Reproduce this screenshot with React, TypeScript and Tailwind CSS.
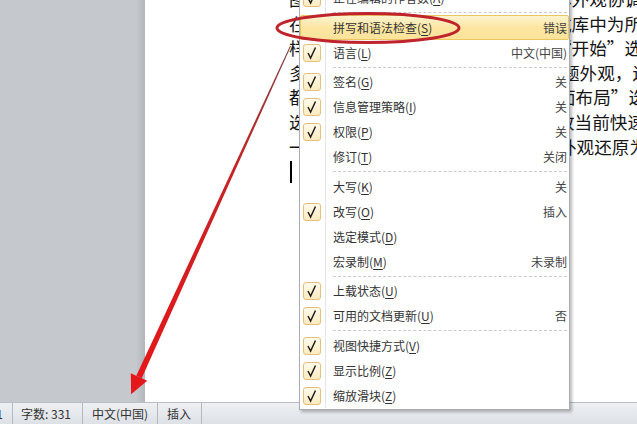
import React from "react";

type MenuRow =
  | { sep: true; h: string }
  | {
      sep?: false;
      label: string;
      hotkey: string;
      value?: string;
      checked?: boolean;
      active?: boolean;
    };

const menuRows: MenuRow[] = [
  { label: "正在编辑的作者数", hotkey: "A", checked: true },
  { sep: true, h: "h-[5px]" },
  { label: "拼写和语法检查", hotkey: "S", value: "错误", active: true },
  { label: "语言", hotkey: "L", value: "中文(中国)", checked: true },
  { sep: true, h: "h-[4px]" },
  { label: "签名", hotkey: "G", value: "关", checked: true },
  { label: "信息管理策略", hotkey: "I", value: "关", checked: true },
  { label: "权限", hotkey: "P", value: "关", checked: true },
  { label: "修订", hotkey: "T", value: "关闭" },
  { sep: true, h: "h-[5px]" },
  { label: "大写", hotkey: "K", value: "关" },
  { label: "改写", hotkey: "O", value: "插入", checked: true },
  { label: "选定模式", hotkey: "D" },
  { label: "宏录制", hotkey: "M", value: "未录制" },
  { sep: true, h: "h-[4px]" },
  { label: "上载状态", hotkey: "U", checked: true },
  { label: "可用的文档更新", hotkey: "U", value: "否", checked: true },
  { sep: true, h: "h-[5px]" },
  { label: "视图快捷方式", hotkey: "V", checked: true },
  { label: "显示比例", hotkey: "Z", checked: true },
  { label: "缩放滑块", hotkey: "Z", checked: true },
];

// document lines under the menu: head sits at the left margin, tail peeks out on the right
const docLines = [
  { head: "图", tail: "体外观协调。", shift: "ml-0" },
  { head: "在", tail: "式库中为所选文本", shift: "ml-0" },
  { head: "样", tail: "“开始”选项卡上", shift: "ml-0" },
  { head: "多", tail: "题外观，还可以", shift: "ml-[8px]" },
  { head: "都", tail: "面布局”选项卡", shift: "ml-[4px]" },
  { head: "选", tail: "改当前快速样式", shift: "ml-[3px]" },
  { head: "一", tail: "外观还原为当前", shift: "ml-[5px]" },
];

const font = { fontFamily: '"Noto Sans CJK SC", "Noto Sans", sans-serif' };

const CheckBox = () => (
  <div className="w-[18px] h-[18px] rounded-[3px] border border-[#e2c07a] bg-gradient-to-b from-[#fffaeb] to-[#fdebc0] flex items-center justify-center">
    <svg width="16" height="16" viewBox="0 0 16 16">
      <path d="M4 8 L6.6 13 L11.5 2.5" fill="none" stroke="#1d1d1d" strokeWidth="1.5" />
    </svg>
  </div>
);

const StatusMenu = () => (
  <div
    className="absolute left-[299px] top-[-16px] w-[271px] bg-white border border-[#a9adb2] pb-[1px] shadow-[2px_2px_3px_rgba(0,0,0,0.28)] text-[12px] text-[#333]"
    style={font}
  >
    {menuRows.map((row, i) =>
      row.sep ? (
        <div key={i} className={`flex ${row.h}`}>
          <div className="w-[26px] border-r border-[#e3e4e6]" />
          <div className="flex-1 flex items-center ml-[7px] mr-[2px]">
            <div className="w-full border-t border-dashed border-[#c9cacc]" />
          </div>
        </div>
      ) : (
        <div
          key={i}
          className={
            row.active
              ? "flex h-[25px] items-center rounded-[2px] border border-[#ecc660] bg-gradient-to-b from-[#fdf3cf] via-[#fce6a2] to-[#fbe39a]"
              : "flex h-[25px] items-center"
          }
        >
          <div
            className={
              row.active
                ? "w-[25px] h-full flex items-center pl-[2px]"
                : "w-[26px] h-full flex items-center pl-[3px] border-r border-[#e3e4e6]"
            }
          >
            {row.checked && <CheckBox />}
          </div>
          <div className="flex-1 pl-[7px] whitespace-nowrap">
            {row.label}(<span className="underline underline-offset-2">{row.hotkey}</span>)
          </div>
          {row.value && (
            <div className={row.active ? "pr-[1px] text-[#444]" : "pr-[2px] text-[#444]"}>{row.value}</div>
          )}
        </div>
      )
    )}
  </div>
);

const Overlay = () => (
  <svg className="absolute inset-0 pointer-events-none" width="637" height="424" viewBox="0 0 637 424">
    <defs>
      <linearGradient id="shaft" x1="0" y1="0" x2="0" y2="1">
        <stop offset="0" stopColor="#7c4545" />
        <stop offset="0.35" stopColor="#c42426" />
        <stop offset="1" stopColor="#e5171a" />
      </linearGradient>
    </defs>
    <ellipse cx="368" cy="28" rx="91" ry="14.5" fill="none" stroke="#bf232b" strokeWidth="3" />
    <polygon points="290.05,45.8 290.95,46.2 141.7,378.2 136.3,375.8" fill="url(#shaft)" />
    <polygon points="147.2,380.7 130.8,373.3 131.1,394.3" fill="#e5171a" />
  </svg>
);

export default function App() {
  return (
    <div className="relative w-[637px] h-[424px] overflow-hidden bg-white flex flex-col" style={font}>
      <div className="flex h-[402px]">
        <div className="w-[145px] shrink-0 flex bg-[#c5c8cd]">
          <div className="flex-1" />
          <div className="w-[9px] bg-gradient-to-r from-[#c5c8cd] to-[#b2b5ba]" />
        </div>
        <div className="flex-1 min-w-0 bg-white overflow-hidden">
          <div className="mt-[-13px] pl-[144px] text-[17.6px] leading-[24.6px] text-[#151515]">
            {docLines.map((line, i) => (
              <div key={i} className="flex whitespace-nowrap">
                <span className="w-[265px] shrink-0">{line.head}</span>
                <span className={`shrink-0 ${line.shift}`}>{line.tail}</span>
              </div>
            ))}
            <div className="h-[24.6px] pt-[2px] pl-[1px]">
              <div className="w-[2px] h-[22px] bg-black" />
            </div>
          </div>
        </div>
      </div>

      <div className="h-[22px] flex items-stretch border-t border-[#b9bfc6] bg-gradient-to-b from-[#eef0f3] to-[#dde1e6] text-[12px] text-[#333]">
        <div className="w-[13px] overflow-hidden flex items-center justify-end pr-[9px] border-r border-[#b3b9c0]">
          <span className="whitespace-nowrap">1</span>
        </div>
        <div className="w-[70px] flex items-center pl-[8px] border-r border-[#b3b9c0] whitespace-nowrap">字数: 331</div>
        <div className="w-[75px] flex items-center pl-[9px] border-r border-[#b3b9c0] whitespace-nowrap">中文(中国)</div>
        <div className="w-[44px] flex items-center pl-[9px] border-r border-[#b3b9c0] whitespace-nowrap">插入</div>
        <div className="flex-1" />
      </div>

      <StatusMenu />
      <Overlay />
    </div>
  );
}
